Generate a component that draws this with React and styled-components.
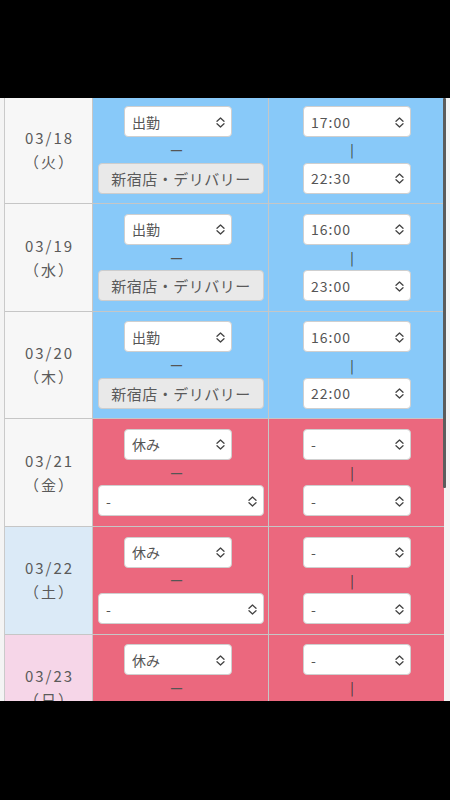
import React from "react";
import styled, { createGlobalStyle } from "styled-components";

const GlobalStyle = createGlobalStyle`
  html, body { margin: 0; padding: 0; background: #000; }
  body { font-family: "Noto Sans CJK JP", "Noto Sans", sans-serif; }
  * { box-sizing: border-box; }
`;

const Screen = styled.div`
  padding-top: 98px;
  width: 450px;
  height: 800px;
  background: #000;
`;

const Viewport = styled.div`
  position: relative;
  width: 450px;
  height: 603px;
`;

const Scroller = styled.div`
  width: 450px;
  height: 603px;
  overflow-y: auto;
  overflow-x: hidden;
  background: #f4f4f4;
  scrollbar-width: none;
  &::-webkit-scrollbar { display: none; }
`;

const ScrollThumb = styled.div`
  position: absolute;
  left: 443px;
  top: 0;
  width: 3px;
  height: 390px;
  background: #5c5c5c;
  border-radius: 1px;
  pointer-events: none;
`;

const Table = styled.div`
  margin-left: 4px;
  margin-top: -1.3px;
  padding-bottom: 72px;
  border-left: 1px solid #cacaca;
  width: 440px;
`;

const Row = styled.div`
  display: grid;
  grid-template-columns: 88px 176px 175px;
  height: 107.6px;
  border-bottom: 1px solid #c6c6c6;
`;

const DateCell = styled.div`
  display: flex;
  flex-direction: column;
  align-items: center;
  justify-content: center;
  border-right: 1px solid #c6c6c6;
  background: ${(p) =>
    p.$tone === "sat" ? "#dbeaf7" : p.$tone === "sun" ? "#f6d6e8" : "#f7f7f7"};
  color: #5a5a5a;
  font-size: 15px;
  letter-spacing: 2px;
  line-height: 24px;
  padding-left: 2px;
`;

const DateLine = styled.span`
  display: block;
`;

const Cell = styled.div`
  display: flex;
  flex-direction: column;
  align-items: flex-start;
  padding-top: 9.5px;
  background: ${(p) => (p.$work ? "#88c9f9" : "#eb687e")};
  border-right: ${(p) => (p.$last ? "none" : "1px solid #c6c6c6")};
  padding-left: ${(p) => p.$pad}px;
`;

const SelectWrap = styled.div`
  position: relative;
  width: ${(p) => p.$w}px;
  height: 31px;
  margin-left: ${(p) => p.$ml || 0}px;
`;

const NativeSelect = styled.select`
  appearance: none;
  -webkit-appearance: none;
  width: 100%;
  height: 100%;
  margin: 0;
  border: 1px solid #cfcfcf;
  border-radius: 4px;
  background: #fff;
  color: #555;
  font-family: "Noto Sans CJK JP", "Noto Sans", sans-serif;
  font-size: 14px;
  letter-spacing: ${(p) => (p.$time ? "1px" : "0")};
  padding: 0 22px 0 7px;
  outline: none;
`;

const Chevron = styled.svg`
  position: absolute;
  right: 7px;
  top: 10.5px;
  pointer-events: none;
`;

const Connector = styled.div`
  width: 108px;
  height: 25.5px;
  margin-left: ${(p) => p.$ml}px;
  display: flex;
  align-items: center;
  justify-content: center;
  padding-right: ${(p) => p.$shift}px;
  color: ${(p) => (p.$vertical ? "#333" : "#555")};
  font-size: ${(p) => (p.$vertical ? "13px" : "14px")};
  line-height: 1;
`;

const ShopButton = styled.button`
  width: 166px;
  height: 31px;
  margin: 0;
  border: 1px solid #cdcdcd;
  border-radius: 4px;
  background: #e9e9e9;
  color: #5a5a5a;
  font-family: "Noto Sans CJK JP", "Noto Sans", sans-serif;
  font-size: 15px;
  letter-spacing: 0.5px;
  padding: 0;
`;

function UpDown() {
  return (
    <Chevron width="9" height="11" viewBox="0 0 9 11" fill="none">
      <path d="M1 4.3 L4.5 1 L8 4.3" stroke="#444" strokeWidth="1.3" strokeLinecap="round" strokeLinejoin="round" />
      <path d="M1 6.7 L4.5 10 L8 6.7" stroke="#444" strokeWidth="1.3" strokeLinecap="round" strokeLinejoin="round" />
    </Chevron>
  );
}

function Select({ value, options, width, ml, time }) {
  return (
    <SelectWrap $w={width} $ml={ml}>
      <NativeSelect defaultValue={value} $time={time}>
        {options.map((o) => (
          <option key={o} value={o}>
            {o}
          </option>
        ))}
      </NativeSelect>
      <UpDown />
    </SelectWrap>
  );
}

const statusOptions = ["出勤", "休み"];
const shopOptions = ["-", "新宿店・デリバリー"];
const timeOptions = ["-", "16:00", "17:00", "22:00", "22:30", "23:00"];

const rows = [
  { date: "03/18", dow: "火", work: true, start: "17:00", end: "22:30" },
  { date: "03/19", dow: "水", work: true, start: "16:00", end: "23:00" },
  { date: "03/20", dow: "木", work: true, start: "16:00", end: "22:00" },
  { date: "03/21", dow: "金", work: false },
  { date: "03/22", dow: "土", work: false, tone: "sat" },
  { date: "03/23", dow: "日", work: false, tone: "sun" },
  { date: "03/24", dow: "月", work: false },
  { date: "03/25", dow: "火", work: false },
];

export default function App() {
  return (
    <>
      <GlobalStyle />
      <Screen>
        <Viewport>
          <Scroller>
            <Table>
              {rows.map((r) => (
                <Row key={r.date}>
                  <DateCell $tone={r.tone}>
                    <DateLine>{r.date}</DateLine>
                    <DateLine>（{r.dow}）</DateLine>
                  </DateCell>
                  <Cell $work={r.work} $pad={5}>
                    <Select value={r.work ? "出勤" : "休み"} options={statusOptions} width={108} ml={26} />
                    <Connector $ml={26} $shift={3}>ー</Connector>
                    {r.work ? (
                      <ShopButton type="button">新宿店・デリバリー</ShopButton>
                    ) : (
                      <Select value="-" options={shopOptions} width={166} />
                    )}
                  </Cell>
                  <Cell $work={r.work} $pad={34} $last>
                    <Select value={r.work ? r.start : "-"} options={timeOptions} width={108} time />
                    <Connector $ml={0} $shift={10} $vertical>|</Connector>
                    <Select value={r.work ? r.end : "-"} options={timeOptions} width={108} time />
                  </Cell>
                </Row>
              ))}
            </Table>
          </Scroller>
          <ScrollThumb />
        </Viewport>
      </Screen>
    </>
  );
}
